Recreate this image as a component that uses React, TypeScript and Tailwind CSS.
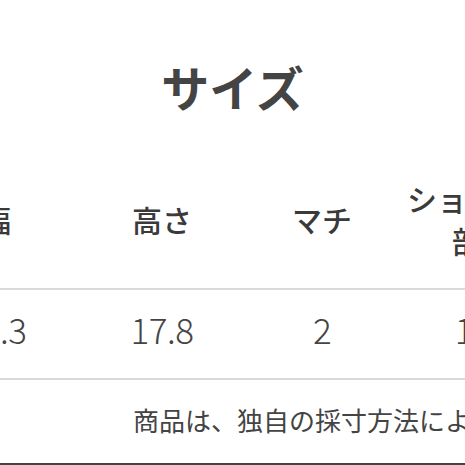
import React from "react";

const font = { fontFamily: '"Noto Sans CJK JP", "Noto Sans", sans-serif' };

export default function App() {
  return (
    <div
      className="w-[465px] h-[465px] overflow-hidden bg-white text-[#444] flex flex-col"
      style={font}
    >
      <h1 className="pt-[50px] text-center text-[48px] leading-[72px] font-bold text-[#444]">
        サイズ
      </h1>
      <div className="mt-[28px] ml-[-92px] w-[654px]">
        <div className="grid grid-cols-[174px_160px_160px_160px] h-[140px] items-center border-b-2 border-[#d9d9d9] text-[30px] leading-[42px] font-medium text-[#3a3a3a]">
          <div className="text-center pr-[28px]">横幅</div>
          <div className="text-center">高さ</div>
          <div className="text-center">マチ</div>
          <div className="text-center">ショルダー部分</div>
        </div>
        <div className="grid grid-cols-[174px_160px_160px_160px] h-[90px] pb-[10px] items-center border-b-2 border-[#d9d9d9] text-[35px] leading-[48px] tracking-[-0.5px] font-light text-[#444]">
          <div className="text-center">26.3</div>
          <div className="text-center">17.8</div>
          <div className="text-center">2</div>
          <div className="text-center">120</div>
        </div>
      </div>
      <div className="flex-1 flex items-center pb-[4px] pl-[133px] whitespace-nowrap text-[26px] leading-[36px] text-[#444]">
        商品は、独自の採寸方法により測定しております。
      </div>
      <div className="h-[2px] bg-[#444]" />
    </div>
  );
}
